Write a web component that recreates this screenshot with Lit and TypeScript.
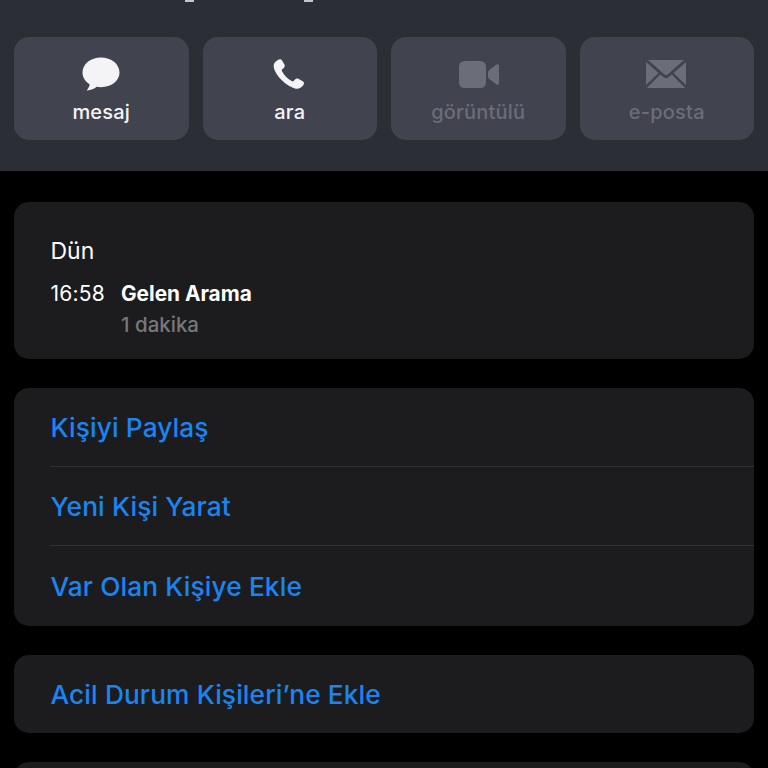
import { LitElement, html, css } from "lit";
import { customElement } from "lit/decorators.js";

@customElement("app-root")
export class AppRoot extends LitElement {
  static styles = css`
    :host { display: block; width: 768px; height: 768px; overflow: hidden; background: #000; font-family: "Inter", "Liberation Sans", sans-serif; }
    .head { height: 171px; box-sizing: border-box; background: #2c2e36; padding: 37px 14px 0; position: relative; }
    .cut { position: absolute; top: 0; height: 2px; width: 9px; background: #c4c5ca; }
    .cut.a { left: 185px; }
    .cut.b { left: 304px; }
    .actions { display: grid; grid-template-columns: repeat(4, 1fr); gap: 14px; }
    .action { height: 103px; border-radius: 15px; background: #41434e; display: flex; flex-direction: column; align-items: center; color: #f4f4f6; }
    .action svg { display: block; margin-top: 20px; height: 36px; width: 44px; }
    .action span { font-size: 20px; letter-spacing: 0.2px; font-weight: 500; line-height: 24px; margin-top: 7px; }
    .action.off { color: #6b6d78; }
    .cards { padding: 31px 14px 0; display: flex; flex-direction: column; gap: 29px; }
    .card { background: #1c1c1e; border-radius: 15px; }
    .recent { height: 157.3px; box-sizing: border-box; padding: 34px 36.500px 0; color: #fff; }
    .day { font-size: 23px; line-height: 30px; }
    .call { display: flex; margin-top: 15px; }
    .time { font-size: 21px; letter-spacing: 0.2px; line-height: 26px; width: 70.500px; }
    .title { font-size: 20.800px; font-weight: 700; line-height: 26px; }
    .sub { font-size: 20.500px; line-height: 26px; color: #77777b; margin-top: 5px; font-weight: 500; }
    .list { height: 237.300px; display: flex; flex-direction: column; }
    .link { height: 78.100px; box-sizing: border-box; padding-top: 1px; display: flex; align-items: center; padding-left: 36.500px; color: #1a84f2; font-size: 26.300px; letter-spacing: 0.1px; font-weight: 500; }
    .link.fill { flex: 1; }
    .solo { height: 78.500px; }
    .sep { height: 1px; background: #313134; margin-left: 36px; }
    .stub { height: 60px; }
  `;
  render() {
    return html`
      <div class="head">
        <div class="cut a"></div>
        <div class="cut b"></div>
        <div class="actions">
          <div class="action">
            <svg viewBox="-2 0 44 36"><path fill="currentColor" d="M20 0.500C9.600 0.500 1.500 7.100 1.500 15.600c0 5 2.800 9.200 7.200 11.800-.4 2.300-1.800 4.600-3 6 3.700.2 7.400-1.400 10-3.600 1.400.3 2.800.4 4.300.4 10.400 0 18.500-6.200 18.500-14.600C38.500 7.100 30.400 0.500 20 0.500Z"/></svg>
            <span>mesaj</span>
          </div>
          <div class="action">
            <svg viewBox="-1 0 44 36"><path fill="currentColor" d="M9.200 2.800c1.500-1 3-.7 3.900.8l2.200 3.700c.8 1.400.5 2.700-.6 3.700l-1.500 1.300c-.6.500-.6 1.100-.2 1.900 1.100 2.100 2.500 4 4.200 5.700 1.700 1.700 3.600 3.100 5.500 4.200.8.400 1.400.4 1.900-.2l1.400-1.500c1-1.100 2.300-1.300 3.700-.5l4 2.300c1.500.9 1.700 2.400.7 3.800-2 2.800-4.700 4.300-7.700 3.700-4.300-.8-9.300-3.800-13.600-8.100C8.500 19.300 5.400 14 4.700 9.900c-.5-3 1.400-5.300 4.500-7.100Z"/></svg>
            <span>ara</span>
          </div>
          <div class="action off">
            <svg viewBox="-2 0 44 36"><rect x="1" y="4" width="27" height="27" rx="5.500" fill="currentColor"/><path fill="currentColor" d="M30 15.500Q30 14 31.200 13L38.500 7.400Q41 6.500 41 9V26Q41 28.500 38.500 27.600L31.200 22Q30 21 30 19.500Z"/></svg>
            <span>görüntülü</span>
          </div>
          <div class="action off">
            <svg viewBox="-1 0 44 36"><path fill="currentColor" d="M2 3h36L21.500 17.500c-.9.800-2.100.800-3 0Z M0 5l12.500 11L0 28Z M40 5v23L27.500 16Z M14.200 17.500l3 2.600c1.700 1.400 3.900 1.400 5.600 0l3-2.600L39 31H1Z"/></svg>
            <span>e-posta</span>
          </div>
        </div>
      </div>
      <div class="cards">
        <div class="card recent">
          <div class="day">Dün</div>
          <div class="call">
            <div class="time">16:58</div>
            <div>
              <div class="title">Gelen Arama</div>
              <div class="sub">1 dakika</div>
            </div>
          </div>
        </div>
        <div class="card list">
          <div class="link">Kişiyi Paylaş</div>
          <div class="sep"></div>
          <div class="link">Yeni Kişi Yarat</div>
          <div class="sep"></div>
          <div class="link fill">Var Olan Kişiye Ekle</div>
        </div>
        <div class="card"><div class="link solo">Acil Durum Kişileri’ne Ekle</div></div>
        <div class="card stub"></div>
      </div>
    `;
  }
}
